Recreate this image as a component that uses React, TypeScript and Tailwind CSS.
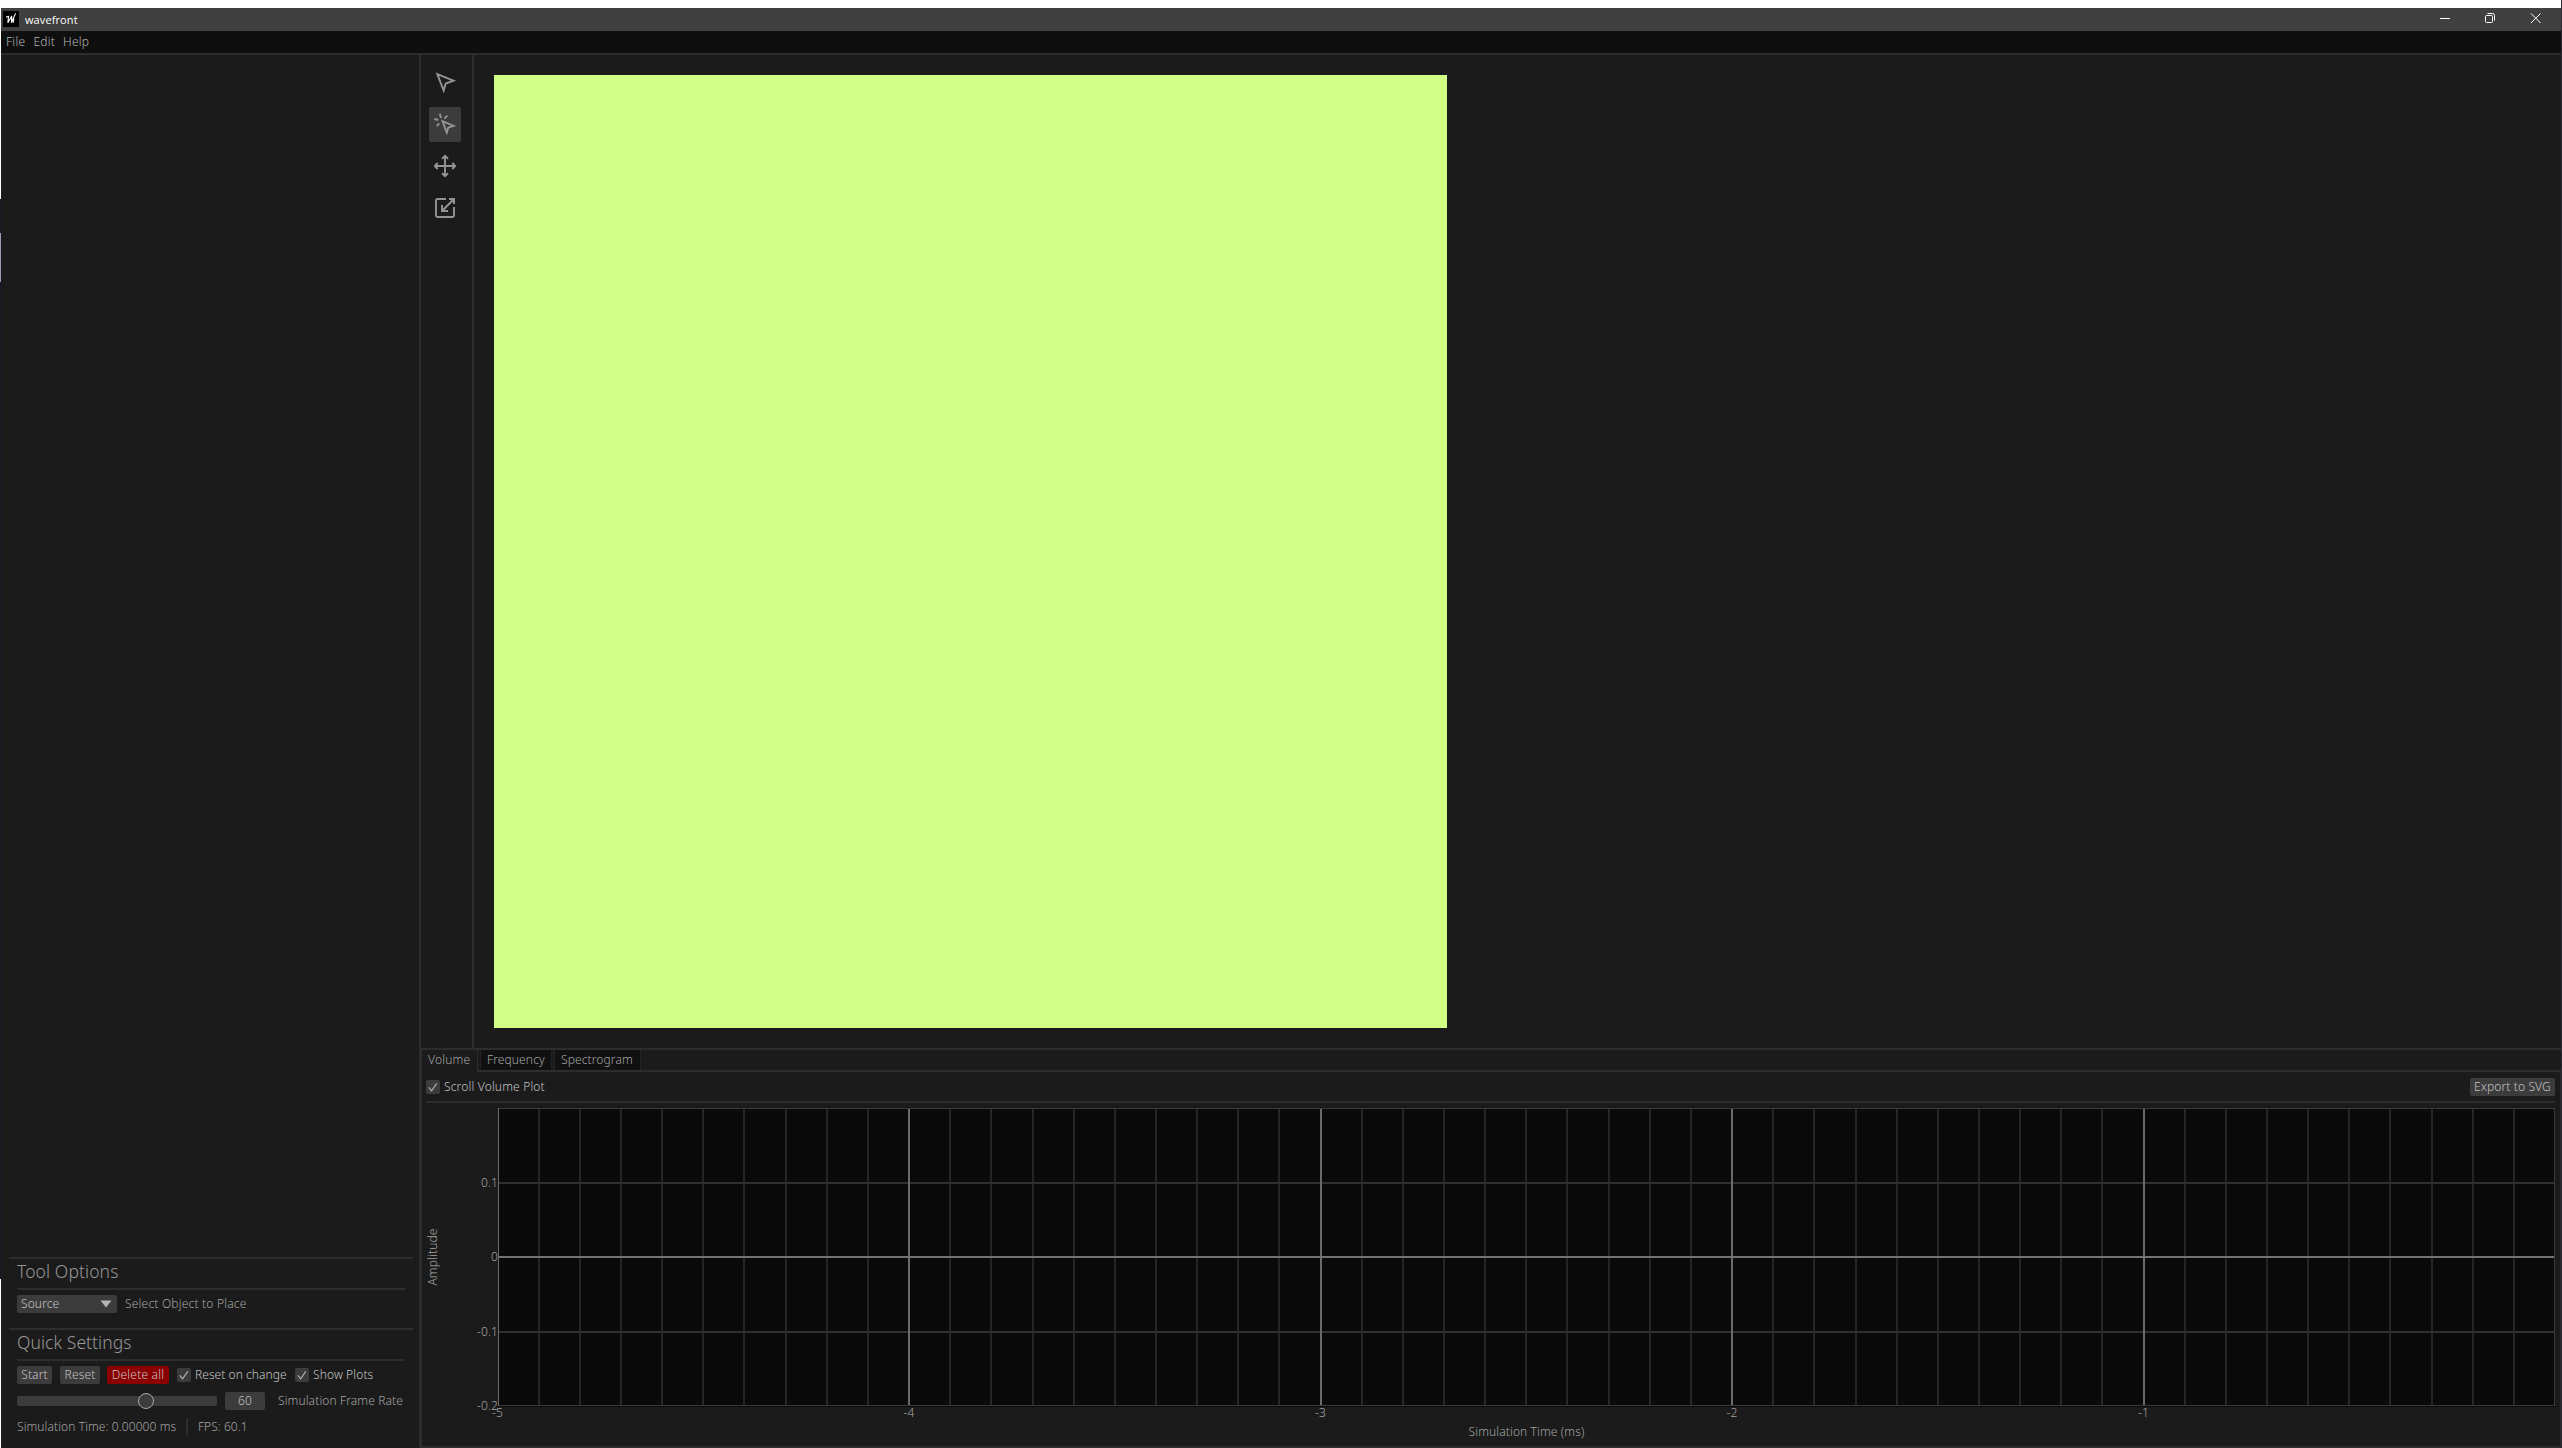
import type { ReactNode } from "react";

const MINOR = Array.from({ length: 50 }, (_, i) => i);

function Text({ children, className = "" }: { children: ReactNode; className?: string }) {
  return <span className={`block shrink-0 whitespace-pre ${className}`}>{children}</span>;
}

function Rule({ className = "" }: { className?: string }) {
  return <div className={`h-[2px] shrink-0 bg-[#2d2d2d] ${className}`} />;
}

function Check() {
  return (
    <span className="flex h-[14px] w-[14px] shrink-0 rounded-[2px] bg-[#3c3c3c]">
      <svg width="14" height="14" viewBox="0 0 14 14" fill="none" stroke="#b4b4b4" strokeWidth="1.1">
        <path d="M2.8 7.4 5.6 10.8 10.8 3.4" />
      </svg>
    </span>
  );
}

function Tool({ active, children }: { active?: boolean; children: ReactNode }) {
  return (
    <button className={`h-[35px] w-8 rounded-[2px] ${active ? "bg-[#3c3c3c]" : ""}`}>
      <svg width="32" height="35" viewBox="0 0 32 35" fill="none" stroke="#949494" strokeWidth="1.9">
        {children}
      </svg>
    </button>
  );
}

function TitleBar() {
  return (
    <div className="flex h-[23px] items-center bg-[#404040] pl-[2px]">
      <svg width="16" height="16" viewBox="0 0 16 16" className="-mt-px">
        <rect width="16" height="16" fill="#000" />
        <path d="M3 6.300 5.600 5.300 4.800 11.800 8.700 5 8.400 11.800 12.600 2.400M10.800 7.500 10.300 11.800" fill="none" stroke="#fff" strokeWidth="1.1" strokeLinejoin="bevel" />
      </svg>
      <Text className="ml-[6px] font-['Open_Sans'] text-[11px] leading-4 font-normal tracking-[0.1px] text-white">wavefront</Text>
      <div className="ml-auto flex h-full items-center">
        <svg width="122" height="23" viewBox="0 0 122 23" fill="none" stroke="#fff" strokeWidth="1">
          <path d="M1 10.5H11" />
          <rect x="46.5" y="7.5" width="7" height="7" rx="1" />
          <path d="M48.5 5.5H53.5Q55.5 5.5 55.5 7.5V12.5" />
          <path d="M92 5.5 101.500 15M101.500 5.500 92 15" />
        </svg>
      </div>
    </div>
  );
}

function SidePanel() {
  return (
    <div className="flex w-[418px] shrink-0 flex-col justify-end bg-[#1b1b1b] pr-[6px] pb-3 pl-2">
      <Rule />
      <div className="px-2">
        <div className="flex h-[29px] items-center pb-[6px] text-[17.5px] text-[#979797]">
          <Text className="tracking-[0.1px]">Tool Options</Text>
        </div>
        <Rule />
        <div className="mt-[5px] flex h-[18px] items-center gap-2">
          <div className="flex h-[18px] w-[100px] items-center justify-between rounded-[2px] bg-[#3c3c3c] pr-[5px] pl-1 text-[#c4c4c4]">
            <Text>Source</Text>
            <svg width="12" height="8" viewBox="0 0 12 8">
              <path d="M.5 .5H11.500L6 7.500Z" fill="#b4b4b4" />
            </svg>
          </div>
          <Text className="tracking-[0.2px]">Select Object to Place</Text>
        </div>
      </div>
      <Rule className="mt-[15px]" />
      <div className="px-2">
        <div className="flex h-[29px] items-center pb-[6px] text-[17.5px] text-[#979797]">
          <Text className="tracking-[0.05px]">Quick Settings</Text>
        </div>
        <Rule />
        <div className="mt-[5px] flex h-[18px] items-center text-[#c4c4c4]">
          <button className="flex h-[18px] w-[35px] items-center justify-center rounded-[2px] bg-[#3c3c3c]">
            <Text>Start</Text>
          </button>
          <button className="ml-2 flex h-[18px] w-[40px] items-center justify-center rounded-[2px] bg-[#3c3c3c]">
            <Text>Reset</Text>
          </button>
          <button className="ml-[7px] flex h-[18px] w-[62px] items-center justify-center rounded-[2px] bg-[#8b0000]">
            <Text className="tracking-[0.2px]">Delete all</Text>
          </button>
          <div className="ml-2 flex w-[118px] items-center gap-1">
            <Check />
            <Text className="tracking-[0.05px]">Reset on change</Text>
          </div>
          <div className="flex items-center gap-1">
            <Check />
            <Text>Show Plots</Text>
          </div>
        </div>
        <div className="mt-2 flex h-[18px] items-center">
          <div className="relative h-[10px] w-[200px] rounded-[2px] bg-[#3c3c3c]">
            <div className="absolute top-[-3px] left-[121px] h-4 w-4 rounded-full border-[1.500px] border-[#a8a8a8] bg-[#3c3c3c]" />
          </div>
          <div className="ml-2 flex h-[18px] w-10 items-center justify-center rounded-[2px] bg-[#3c3c3c] text-[#c4c4c4]">
            <Text>60</Text>
          </div>
          <Text className="ml-[13px]">Simulation Frame Rate</Text>
        </div>
        <div className="mt-2 flex h-[18px] items-center">
          <Text className="w-[169px] tracking-[0.09px]">Simulation Time: 0.00000 ms</Text>
          <div className="h-[18px] w-[2px] bg-[#2d2d2d]" />
          <Text className="ml-[10px] tracking-[0.04px]">FPS: 60.1</Text>
        </div>
      </div>
    </div>
  );
}

function Plot() {
  const x = (i: number) => Math.round(i * 41.15 - 0.4) - 1;
  return (
    <svg width="2057" height="299" viewBox="0 0 2057 299" shapeRendering="crispEdges" className="block">
      <rect width="2057" height="299" fill="#0a0a0a" />
      {MINOR.filter((i) => i % 10 !== 0).map((i) => (
        <rect key={i} x={x(i)} y="0" width="2" height="298" fill="#262626" />
      ))}
      <rect x="0" y="74" width="2057" height="2" fill="#303030" />
      <rect x="0" y="223" width="2057" height="2" fill="#303030" />
      {[10, 20, 30, 40].map((i) => (
        <rect key={i} x={x(i)} y="0" width="2" height="298" fill="#6b6b6b" />
      ))}
      <rect x="0" y="148" width="2057" height="2" fill="#737373" />
      <rect x="0.5" y="0.5" width="2056" height="297" fill="none" stroke="#3a3a3a" />
      <rect x="0" y="0" width="1" height="298" fill="#6b6b6b" />
    </svg>
  );
}

function BottomPanel() {
  return (
    <div className="flex h-[400px] flex-col border-t-2 border-[#2d2d2d] bg-[#1b1b1b]">
      <div className="flex h-[22px] shrink-0 border-b-2 border-[#2d2d2d]">
        <div className="z-10 flex h-[22px] w-[57px] items-center border-r border-l border-[#2d2d2d] bg-[#1b1b1b] pb-[2px] pl-[6px]">
          <Text className="tracking-[0.2px]">Volume</Text>
        </div>
        <div className="ml-[2px] flex h-5 w-[72px] items-center border-x border-[#232323] bg-[#111] pl-[6px]">
          <Text>Frequency</Text>
        </div>
        <div className="ml-[2px] flex h-5 w-[87px] items-center border-x border-[#232323] bg-[#111] pl-[6px]">
          <Text>Spectrogram</Text>
        </div>
      </div>
      <div className="flex grow flex-col border-x border-b-2 border-[#2d2d2d] pr-[5px] pl-1">
        <div className="mt-[6px] flex h-[18px] items-center gap-1 text-[#c4c4c4]">
          <Check />
          <Text className="tracking-[0.17px]">Scroll Volume Plot</Text>
          <button className="ml-auto flex h-[18px] w-[85px] items-center justify-center rounded-[2px] bg-[#3c3c3c]">
            <Text>Export to SVG</Text>
          </button>
        </div>
        <Rule className="mt-[5px]" />
        <div className="mt-[5px] flex">
          <div className="flex h-[298px] w-[14px] items-center justify-center">
            <span className="-rotate-90 whitespace-nowrap tracking-[0.15px]">Amplitude</span>
          </div>
          <div className="flex w-[58px] flex-col items-end pt-[66px] leading-[18px]">
            <span className="mb-[56px]">0.1</span>
            <span className="mb-[57px]">0</span>
            <span className="mb-[56px]">-0.1</span>
            <span>-0.2</span>
          </div>
          <div>
            <Plot />
            <div className="-mt-[2px] -ml-[6px] flex h-4 leading-4">
              {["-5", "-4", "-3", "-2", "-1"].map((t) => (
                <span key={t} className="w-[411.500px]">{t}</span>
              ))}
            </div>
          </div>
        </div>
        <div className="mt-[2px] flex justify-center pl-[72px]">
          <Text>Simulation Time (ms)</Text>
        </div>
      </div>
    </div>
  );
}

export default function App() {
  return (
    <div className="flex h-[1448px] w-[2562px] overflow-hidden bg-[#1b1b1b] font-['Noto_Sans',sans-serif] text-[12px] leading-[18px] font-light tracking-[0.12px] text-[#a4a4a4]">
      <div className="flex w-px shrink-0 flex-col bg-[#1a1826]">
        <div className="h-[199px] bg-white" />
        <div className="mt-[34px] h-[49px] bg-[#9b9bb8]" />
        <div className="mt-auto h-[169px] bg-white" />
      </div>
      <div className="flex w-[2560px] shrink-0 flex-col">
        <div className="h-2 shrink-0 bg-white" />
        <TitleBar />
        <div className="flex h-6 shrink-0 items-center gap-2 border-b-2 border-[#2d2d2d] bg-[#0f0f0f] pl-[5px] text-[#b4b4b4]">
          <Text className="tracking-[0.3px]">File</Text>
          <Text className="tracking-[0.2px]">Edit</Text>
          <Text className="tracking-[0.25px]">Help</Text>
        </div>
        <div className="flex grow">
          <SidePanel />
          <div className="flex grow flex-col border-l-2 border-[#2d2d2d]">
            <div className="flex h-[993px]">
              <div className="flex w-[53px] flex-col gap-[7px] border-r-2 border-[#2d2d2d] pt-[10px] pl-2">
                <Tool>
                  <path d="M8.300 9.200 24.500 15.700 16.700 18.500 14.700 25.500Z" />
                </Tool>
                <Tool active>
                  <path d="M13.500 14.200 24.600 18.900 19.200 20.700 17.800 25.500ZM10.700 6.700 12 11M18.300 8.700 15.300 11.700M5.300 12 9.300 13M10.300 16.300 7.700 19" />
                </Tool>
                <Tool>
                  <path d="M6 17H26M16 7V27M13 9.700 16 6.900 19 9.700M13 24.300 16 27.100 19 24.300M8.700 14 5.900 17 8.700 20M23.300 14 26.100 17 23.300 20" />
                </Tool>
                <Tool>
                  <path d="M17 8H8.500Q7 8 7 9.500V24.500Q7 26 8.500 26H23.500Q25 26 25 24.500V16M25 8 13 20M19 20H13V14M20 8H25V13" />
                </Tool>
              </div>
              <div className="p-5">
                <div className="h-[953px] w-[953px] bg-[#d1ff85]" />
              </div>
            </div>
            <BottomPanel />
          </div>
        </div>
      </div>
      <div className="w-px shrink-0 bg-[#2b2938]" />
    </div>
  );
}
